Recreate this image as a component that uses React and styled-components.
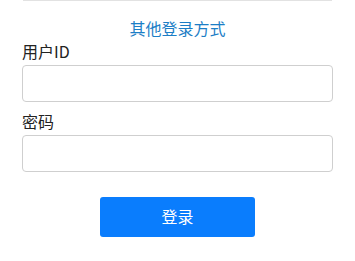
import React from "react";
import styled, { createGlobalStyle } from "styled-components";

const GlobalStyle = createGlobalStyle`
  body {
    margin: 0;
    background: #ffffff;
    font-family: "Noto Sans CJK SC", "Noto Sans", sans-serif;
  }
`;

const Page = styled.div`
  width: 355px;
  height: 261px;
  padding: 0 22px;
  box-sizing: border-box;
  overflow: hidden;
`;

const TopEdge = styled.div`
  height: 1px;
  margin: 0 1px;
  background: #e2e2e2;
`;

const OtherLogin = styled.a`
  display: block;
  margin-top: 16px;
  text-align: center;
  color: #1c7ec6;
  font-size: 16px;
  line-height: 22px;
  text-decoration: none;
`;

const Field = styled.div`
  display: flex;
  flex-direction: column;
  margin-top: ${(props) => props.$top}px;
`;

const Label = styled.label`
  color: #222;
  font-size: 16px;
  line-height: 21px;
  padding-bottom: 3px;
`;

const Input = styled.input`
  height: 37px;
  box-sizing: border-box;
  border: 1px solid #cfcfcf;
  border-radius: 4px;
  padding: 0 10px;
  font-size: 15px;
  outline: none;
`;

const Actions = styled.div`
  display: flex;
  justify-content: center;
  margin-top: 25px;
`;

const SubmitButton = styled.button`
  width: 155px;
  height: 40px;
  padding: 0 0 2px;
  border: 0;
  border-radius: 3px;
  background: #0a7dfd;
  color: #fff;
  font-family: "Noto Sans CJK SC", "Noto Sans", sans-serif;
  font-size: 16px;
  cursor: pointer;
`;

export default function App() {
  return (
    <>
      <GlobalStyle />
      <Page>
        <TopEdge />
        <OtherLogin href="#">其他登录方式</OtherLogin>
        <Field $top={2}>
          <Label>用户ID</Label>
          <Input type="text" />
        </Field>
        <Field $top={9}>
          <Label>密码</Label>
          <Input type="password" />
        </Field>
        <Actions>
          <SubmitButton>登录</SubmitButton>
        </Actions>
      </Page>
    </>
  );
}
